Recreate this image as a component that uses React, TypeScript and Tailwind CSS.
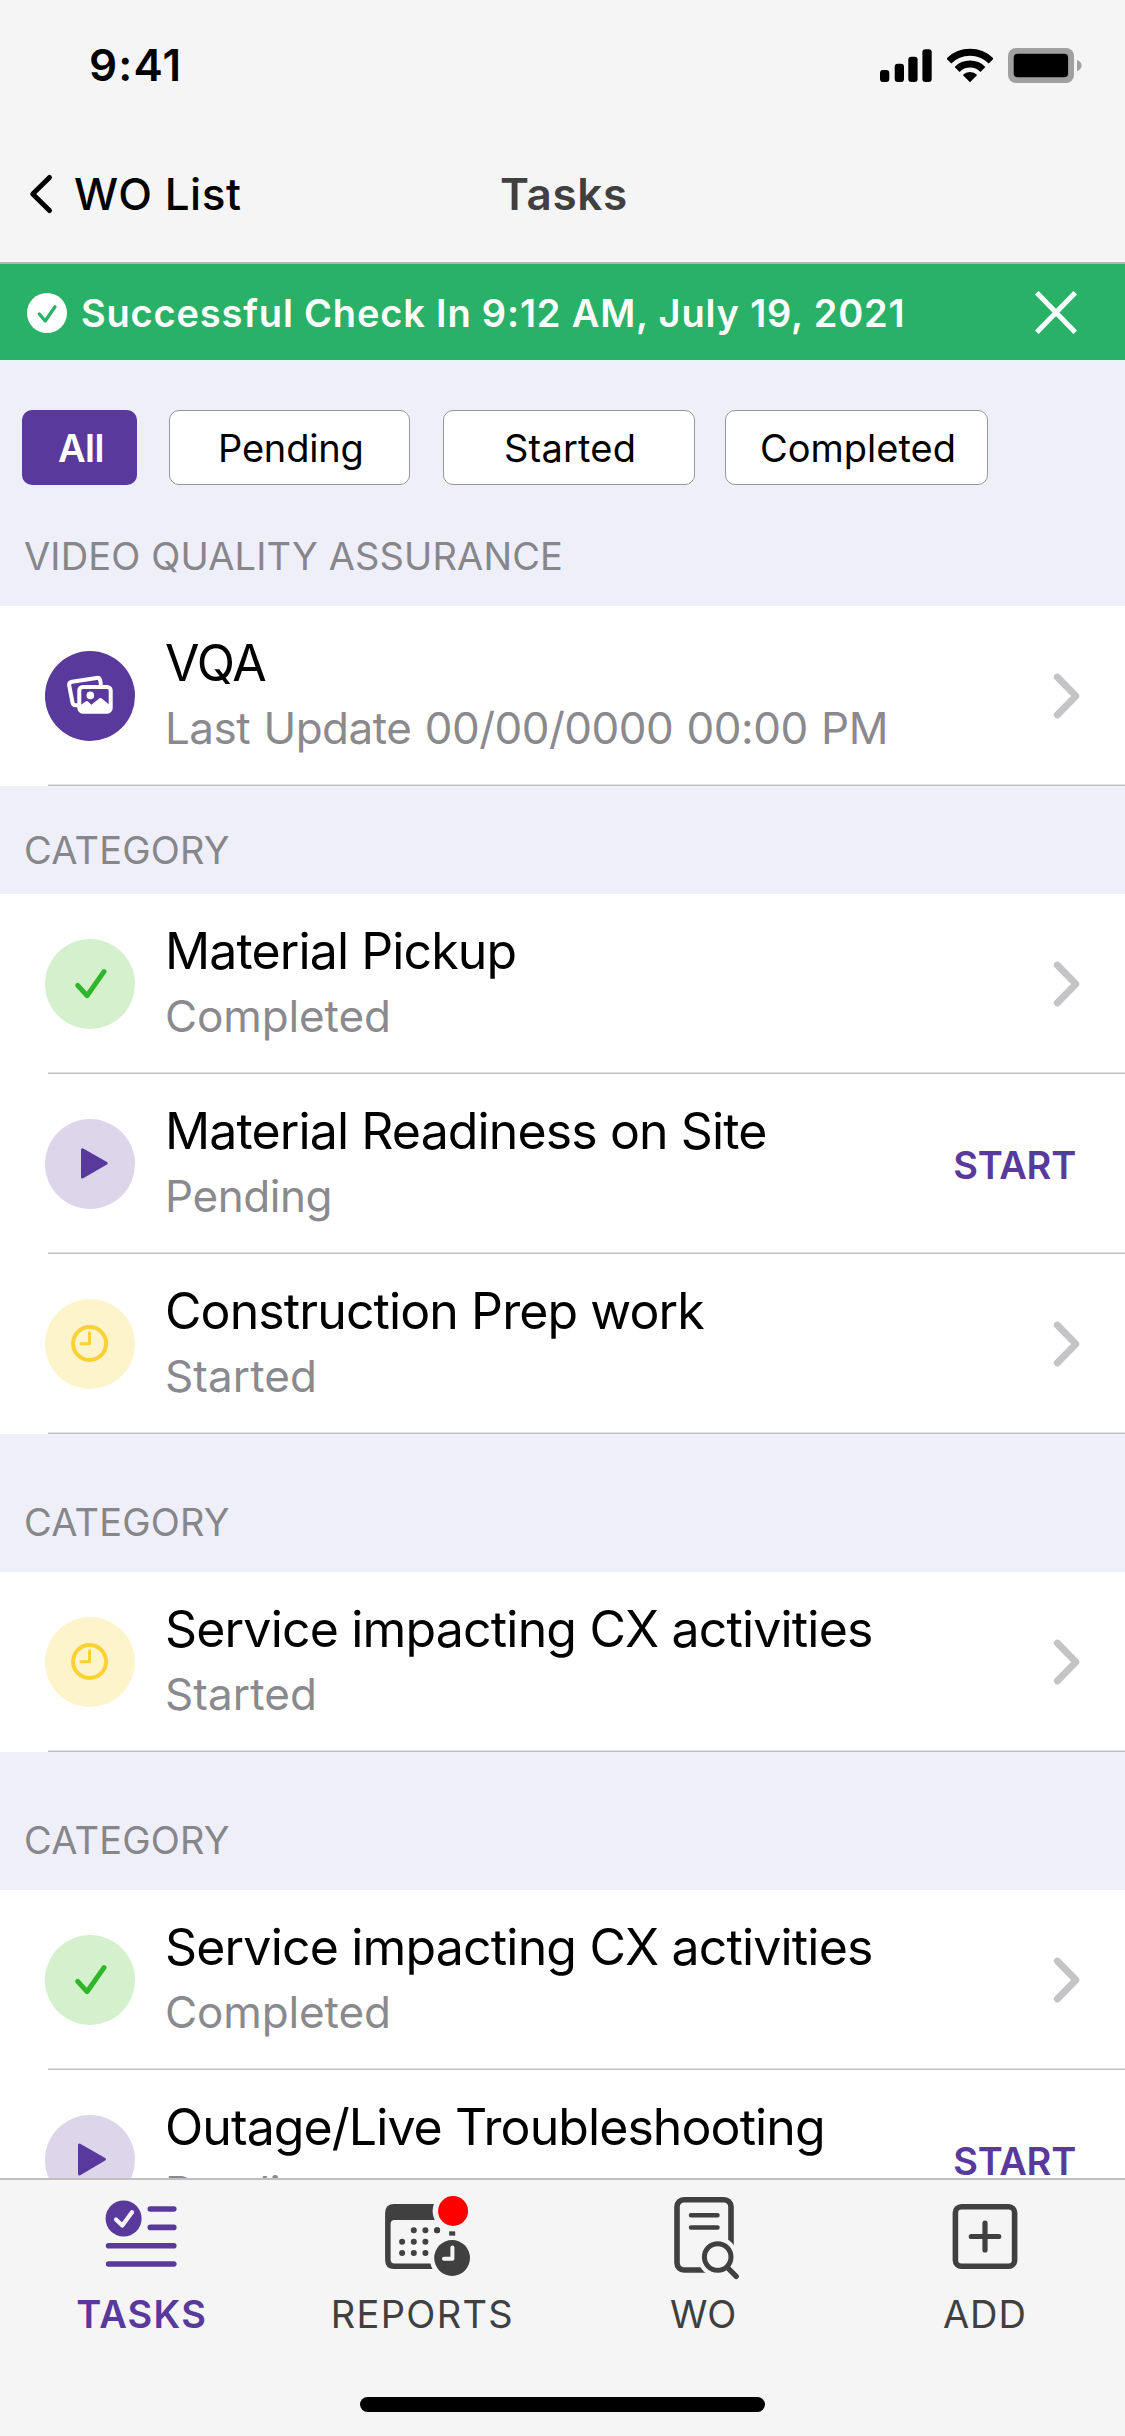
import type { ReactNode } from 'react';

type Status = 'photos' | 'done' | 'play' | 'playLast' | 'clock';

interface Task {
  title: string;
  subtitle: string;
  status: Status;
  titleClass?: string;
  subtitleClass?: string;
  startable?: boolean;
}

interface Section {
  heading: string;
  headingClass: string;
  tasks: Task[];
}

const SECTIONS: Section[] = [
  {
    heading: 'VIDEO QUALITY ASSURANCE',
    headingClass: 'h-[121px] pt-[41px] tracking-[0.14px]',
    tasks: [
      {
        title: 'VQA',
        subtitle: 'Last Update 00/00/0000 00:00 PM',
        status: 'photos',
        titleClass: 'tracking-[-1.1px]',
        subtitleClass: 'tracking-[-0.52px] [word-spacing:1.5px]',
      },
    ],
  },
  {
    heading: 'CATEGORY',
    headingClass: 'h-[108px] pt-[34px] tracking-[0.2px]',
    tasks: [
      { title: 'Material Pickup', subtitle: 'Completed', status: 'done', titleClass: 'tracking-[-0.88px]' },
      {
        title: 'Material Readiness on Site',
        subtitle: 'Pending',
        status: 'play',
        titleClass: 'tracking-[-0.88px]',
        subtitleClass: 'tracking-[-0.43px]',
        startable: true,
      },
      {
        title: 'Construction Prep work',
        subtitle: 'Started',
        status: 'clock',
        titleClass: 'tracking-[-0.9px]',
        subtitleClass: 'tracking-[0.1px]',
      },
    ],
  },
  {
    heading: 'CATEGORY',
    headingClass: 'h-[138px] pt-[58px] tracking-[0.2px]',
    tasks: [
      {
        title: 'Service impacting CX activities',
        subtitle: 'Started',
        status: 'clock',
        subtitleClass: 'tracking-[0.1px]',
      },
    ],
  },
  {
    heading: 'CATEGORY',
    headingClass: 'h-[138px] pt-[58px] tracking-[0.2px]',
    tasks: [
      { title: 'Service impacting CX activities', subtitle: 'Completed', status: 'done' },
      {
        title: 'Outage/Live Troubleshooting',
        subtitle: 'Pending',
        status: 'playLast',
        titleClass: 'tracking-[-0.92px]',
        subtitleClass: 'tracking-[-0.43px]',
        startable: true,
      },
    ],
  },
];

function StatusBar() {
  return (
    <div className="flex h-[132px] items-start justify-between pt-[48px] pr-[43px] pl-[89px]">
      <span className="text-[44px] leading-[34px] font-semibold tracking-[1.14px] text-black">9:41</span>
      <div className="flex items-start">
        <svg className="mr-[15px] h-[35px] w-[52px]" viewBox="0 0 52 35">
          <rect x="0" y="22" width="9.3" height="12" rx="3" />
          <rect x="14.7" y="15.7" width="9.3" height="18.3" rx="3" />
          <rect x="28.3" y="8.7" width="9.3" height="25.3" rx="3" />
          <rect x="42.4" y="1.3" width="9.3" height="32.7" rx="3" />
        </svg>
        <svg className="mr-[15px] h-[35px] w-[46px]" viewBox="0 0 46 35">
          <g transform="translate(23 34.3)" fill="none" stroke="#000">
            <path d="M-21.2-21.2A30 30 0 0 1 21.2-21.2" strokeWidth="7" />
            <path d="M-12.9-12.9A18.3 18.3 0 0 1 12.9-12.9" strokeWidth="7" />
            <path d="M0 0L-7.2-7.2A10.2 10.2 0 0 1 7.2-7.2Z" fill="#000" stroke="none" />
          </g>
        </svg>
        <svg className="h-[35px] w-[74px]" viewBox="0 0 74 35">
          <rect width="66" height="35" rx="8" fill="#a0a0a0" />
          <rect x="5.7" y="5.7" width="54.4" height="23.6" rx="4" />
          <path d="M69 12C75 14 75 21 69 23.3Z" fill="#a0a0a0" />
        </svg>
      </div>
    </div>
  );
}

function NavBar() {
  return (
    <div className="grid h-[132px] grid-cols-[500px_1fr] border-b-2 border-[#b5b5b6] pt-[32px] pl-[28px]">
      <div className="flex h-[60px] w-[300px] items-center">
        <svg className="mr-[20px] h-[44px] w-[26px]" viewBox="0 0 26 44" fill="none" stroke="#000" strokeWidth="5" strokeLinecap="round" strokeLinejoin="round">
          <path d="M21.5 5.5L4.7 22L21.5 38.5" />
        </svg>
        <span className="text-[44px] font-[450] tracking-[0.5px] text-black">WO List</span>
      </div>
      <div className="-ml-[28px] text-[44px] leading-[60px] font-semibold tracking-[0.67px] text-[#404040]">Tasks</div>
    </div>
  );
}

function Banner() {
  return (
    <div className="flex h-[97px] items-center border-b border-[#dcfbee] bg-[#2ab168] pt-[2px] pr-[46px] pl-[27px]">
      <svg className="mr-[14px] h-[40px] w-[40px]" viewBox="0 0 40 40" fill="none">
        <circle cx="20" cy="20" r="20" fill="#fff" />
        <path d="M12.3 21L18.2 28L28 13.8" stroke="#2ab168" strokeWidth="3.3" strokeLinecap="round" strokeLinejoin="round" />
      </svg>
      <span className="flex-1 text-[38px] leading-[50px] font-semibold tracking-[0.82px] whitespace-nowrap text-white">
        Successful Check In 9:12 AM, July 19, 2021
      </span>
      <svg className="h-[46px] w-[46px]" viewBox="0 0 46 46" stroke="#fff" strokeWidth="5">
        <path d="M3.8 2.8L42.2 42.2M42.2 2.8L3.8 42.2" />
      </svg>
    </div>
  );
}

function Filters() {
  const outlined = 'flex h-[75px] items-center rounded-[10px] border-[1.5px] border-[#97979b] bg-white pt-[1px] text-[38px] text-black';
  return (
    <div className="flex h-[124px] items-end pl-[22px]">
      <button className="mr-[32px] flex h-[75px] w-[115px] items-center rounded-[10px] bg-[#59399c] pt-[1px] pl-[36px] text-[38px] font-semibold tracking-[-0.55px] text-white">
        All
      </button>
      <button className={`${outlined} mr-[33px] w-[241px] pl-[48px] tracking-[-0.18px]`}>Pending</button>
      <button className={`${outlined} mr-[30px] w-[252px] pl-[60px] tracking-[0.2px]`}>Started</button>
      <button className={`${outlined} w-[263px] pl-[34px]`}>Completed</button>
    </div>
  );
}

const BADGE_COLORS: Record<Status, string> = {
  photos: 'bg-[#59399c]',
  done: 'bg-[#d4f0cd]',
  play: 'bg-[#ddd6ea]',
  playLast: 'bg-[#ddd6ea]',
  clock: 'bg-[#fef4cb]',
};

const BADGE_ICONS: Record<Status, ReactNode> = {
  photos: (
    <g fill="none" stroke="#fff" strokeWidth="4" strokeLinecap="round" strokeLinejoin="round">
      <path d="M33 54.3H31Q28 54.5 27.5 51.5L24.2 34.5Q23.7 31.3 27 30.7L51.5 26.9Q54.6 26.5 55.2 29.5L56 34" strokeLinecap="butt" />
      <rect x="34.3" y="36" width="31.4" height="24.7" rx="3.5" />
      <circle cx="45.3" cy="44.4" r="3.8" fill="#fff" stroke="none" />
      <path d="M35 54.5L41 50.3Q42 49.7 43 50.6L46.3 53.7L54.6 47.3Q55.7 46.6 56.8 47.5L65.3 54.5V61H35Z" fill="#fff" stroke="none" />
    </g>
  ),
  done: <path d="M32.7 46.3L42 56.7L59 32.6" fill="none" stroke="#2fb62c" strokeWidth="5" strokeLinecap="round" strokeLinejoin="round" />,
  play: <path d="M37.5 30.7V57.9L61.2 44.3Z" fill="#59399c" stroke="#59399c" strokeWidth="3" strokeLinejoin="round" />,
  playLast: <path d="M34.5 30V59L59.4 44.3Z" fill="#59399c" stroke="#59399c" strokeWidth="3" strokeLinejoin="round" />,
  clock: (
    <g fill="none" stroke="#fdd036" strokeLinecap="round" strokeLinejoin="round">
      <circle cx="44.6" cy="44.5" r="16.5" strokeWidth="4" />
      <path d="M44.5 33.7V44.7H36" strokeWidth="3" />
    </g>
  ),
};

function TaskRow({ task }: { task: Task }) {
  return (
    <div className="h-[180px] shrink-0 bg-white">
      <div className="flex h-[178px] pl-[45px]">
        <div className={`mt-[45px] mr-[30px] h-[90px] w-[90px] rounded-full ${BADGE_COLORS[task.status]}`}>
          <svg className="h-[90px] w-[90px]" viewBox="0 0 90 90">
            {BADGE_ICONS[task.status]}
          </svg>
        </div>
        <div className="flex-1 pt-[27px] whitespace-nowrap">
          <div className={`text-[50px] leading-[60px] text-black ${task.titleClass ?? 'tracking-[-0.82px]'}`}>{task.title}</div>
          <div className={`text-[44px] leading-[70px] text-[#8a8a8e] ${task.subtitleClass ?? 'tracking-[-0.12px]'}`}>{task.subtitle}</div>
        </div>
        {task.startable ? (
          <button className="mt-[66px] mr-[49px] h-[50px] text-[38px] leading-[50px] font-semibold tracking-[-0.23px] text-[#59399c]">START</button>
        ) : (
          <svg className="mt-[65px] mr-[42px] h-[50px] w-[32px]" viewBox="0 0 32 50" fill="none" stroke="#c4c4c6" strokeWidth="6.8" strokeLinecap="round" strokeLinejoin="round">
            <path d="M6.3 6L24.9 25L6.3 44" />
          </svg>
        )}
      </div>
      <div className="ml-[48px] h-[2px] border-t border-b border-t-[#e2e2e2] border-b-[#bfbfc2]" />
    </div>
  );
}

const TASKS_ICON = (
  <g stroke="#59399c" strokeWidth="5.6" strokeLinecap="round" fill="none">
    <circle cx="32.6" cy="28.5" r="18" fill="#59399c" stroke="none" />
    <path d="M25 29.5L31.3 35.6L41 22.2" stroke="#f5f5f6" strokeWidth="4.2" strokeLinejoin="round" />
    <path d="M59.3 19H82.8M59.3 37.4H82.8M17.6 55.8H82.8M17.6 74H82.8" />
  </g>
);

const REPORTS_ICON = (
  <g fill="#404040">
    <path fillRule="evenodd" d="M22.1 14H74.1Q83.1 14 83.1 23V70Q83.1 79 74.1 79H22.1Q13.1 79 13.1 70V23Q13.1 14 22.1 14ZM22.6 30Q18.6 30 18.6 34V69.5Q18.6 73.5 22.6 73.5H73.4Q77.4 73.5 77.4 69.5V34Q77.4 30 73.4 30Z" />
    <path
      d="M41.8 40.3h.01M53.4 40.3h.01M65.1 40.3h.01M30.1 51.7h.01M41.8 51.7h.01M53.4 51.7h.01M30.1 63h.01M41.8 63h.01M53.4 63h.01"
      stroke="#404040"
      strokeWidth="6"
      strokeLinecap="round"
    />
    <circle cx="81.1" cy="21" r="20.5" fill="#f5f5f6" />
    <circle cx="65.1" cy="40.3" r="3" />
    <circle cx="81.1" cy="21" r="15" fill="#f00" />
    <circle cx="80.1" cy="68" r="22.5" fill="#f5f5f6" />
    <path d="M77.4 41.8H83.1V45H77.4Z" />
    <circle cx="80.1" cy="68" r="17.9" />
    <path d="M80.4 57.5V68.7H72" fill="none" stroke="#f5f5f6" strokeWidth="4" strokeLinecap="round" strokeLinejoin="round" />
  </g>
);

const WO_ICON = (
  <g fill="none" stroke="#404040" strokeLinecap="round">
    <rect x="24" y="9.8" width="54" height="70.2" rx="7" strokeWidth="5.6" />
    <path d="M38 25.3H64.5M38 37.6H64.5" strokeWidth="4.5" />
    <circle cx="64.7" cy="67" r="20" fill="#f5f5f6" stroke="none" />
    <circle cx="64.7" cy="67" r="13.3" strokeWidth="5" />
    <path d="M75 78.2L83.2 86.3" strokeWidth="5.4" />
  </g>
);

const ADD_ICON = (
  <g fill="none" stroke="#404040" strokeLinecap="round">
    <rect x="21.4" y="16.8" width="59.2" height="59.4" rx="6" strokeWidth="5.6" />
    <path d="M51 33V60M37.3 46.5H64.7" strokeWidth="5.2" />
  </g>
);

const TABS: { label: string; icon: ReactNode; labelClass: string }[] = [
  { label: 'TASKS', icon: TASKS_ICON, labelClass: 'pl-[2px] font-semibold tracking-[1.23px] text-[#59399c]' },
  { label: 'REPORTS', icon: REPORTS_ICON, labelClass: 'pl-[1px] tracking-[1.3px] text-[#404040]' },
  { label: 'WO', icon: WO_ICON, labelClass: 'tracking-[-0.2px] text-[#404040]' },
  { label: 'ADD', icon: ADD_ICON, labelClass: 'pl-[1px] tracking-[0.93px] text-[#404040]' },
];

function TabBar() {
  return (
    <div className="flex h-[258px] shrink-0 flex-col items-center border-t-2 border-[#bfbfc0] bg-[#f5f5f6]">
      <div className="grid h-[217px] w-full grid-cols-4">
        {TABS.map((tab) => (
          <div key={tab.label} className="flex flex-col items-center pt-[10px]">
            <svg className="h-[92px] w-[100px]" viewBox="0 0 100 92">
              {tab.icon}
            </svg>
            <span className={`mt-[7px] text-[38px] leading-[50px] ${tab.labelClass}`}>{tab.label}</span>
          </div>
        ))}
      </div>
      <div className="h-[15px] w-[405px] rounded-full bg-black" />
    </div>
  );
}

export default function App() {
  return (
    <div className="flex h-[2436px] w-[1125px] flex-col overflow-hidden bg-[#efeff9] font-['Inter',sans-serif]">
      <header className="shrink-0 bg-[#f5f5f5]">
        <StatusBar />
        <NavBar />
      </header>
      <main className="min-h-0 flex-1 overflow-hidden">
        <Banner />
        <Filters />
        {SECTIONS.map((section, index) => (
          <section key={index}>
            <h2 className={`pl-[24px] text-[38px] leading-[60px] text-[#86868b] ${section.headingClass}`}>{section.heading}</h2>
            {section.tasks.map((task) => (
              <TaskRow key={task.title} task={task} />
            ))}
          </section>
        ))}
      </main>
      <TabBar />
    </div>
  );
}
